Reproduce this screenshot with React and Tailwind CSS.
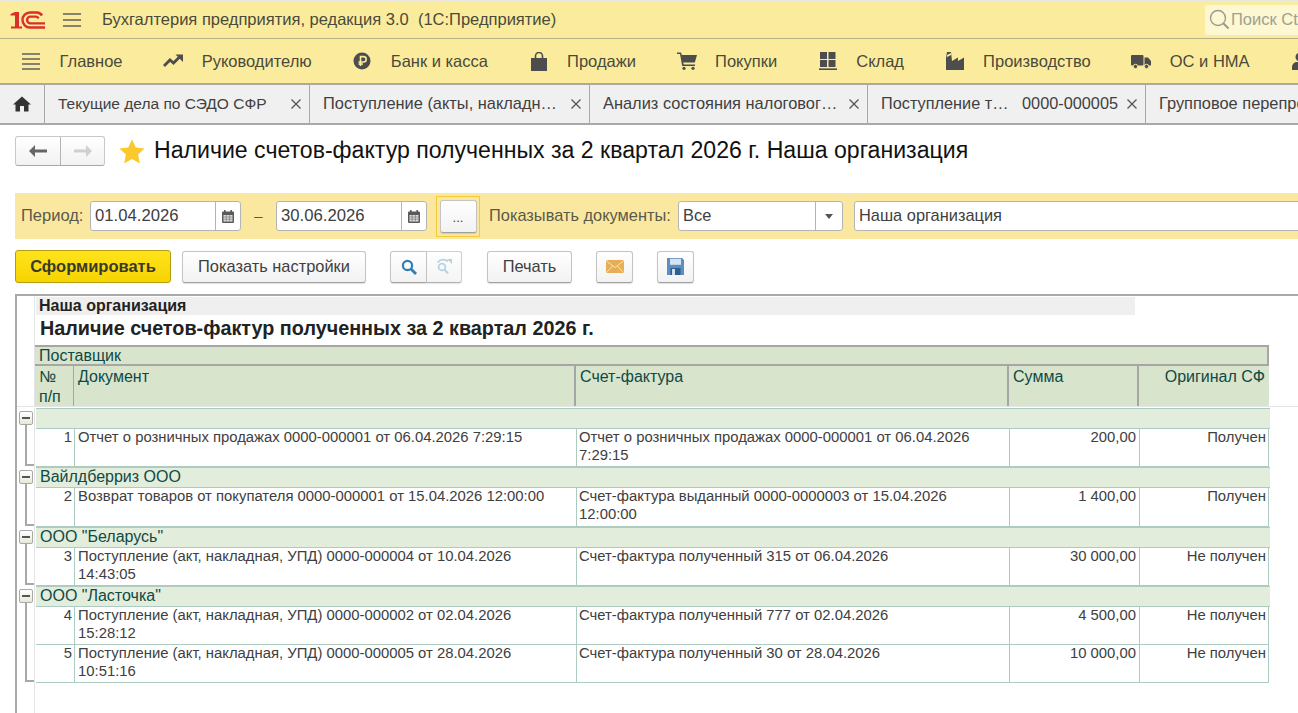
import React from 'react';

const font = 'font-["Liberation_Sans",Arial,sans-serif]';

const Logo1C = () => (
    <svg width="36" height="18" viewBox="0 0 36 18" fill="none">
        <path d="M0.5 3 L5 1 H9 V15.5 H12 V17.5 H1 V15.5 H5 V4.5 H0.5 Z" fill="#d9302c" />
        <path d="M35 16.5 H20 A7.5 7.5 0 0 1 20 1.5 H27 A6.5 6.5 0 0 1 32 4.5" stroke="#d9302c" strokeWidth="2.4" />
        <path d="M35 12.4 H20.5 A3.4 3.4 0 0 1 20.5 5.6 H26 A3 3 0 0 1 28.5 7.5" stroke="#d9302c" strokeWidth="2.4" />
    </svg>
);

const Burger = ({ count = 3, w = 18 }) => (
    <svg width={w} height="18" viewBox="0 0 18 18" stroke="#555" strokeWidth="1.4">
        {count === 3 ? (
            <>
                <path d="M0 3 H18" />
                <path d="M0 9 H18" />
                <path d="M0 15 H18" />
            </>
        ) : (
            <>
                <path d="M0 2 H18" />
                <path d="M0 7 H18" />
                <path d="M0 12 H18" />
                <path d="M0 17 H18" />
            </>
        )}
    </svg>
);

const Trend = () => (
    <svg width="20" height="16" viewBox="0 0 20 16" fill="none">
        <path d="M1 13 L7 7 L10.5 10 L17 3.5" stroke="#4d4d4d" strokeWidth="2.8" />
        <path d="M12.5 1.5 H20 V9 Z" fill="#4d4d4d" />
    </svg>
);

const Ruble = () => (
    <svg width="18" height="18" viewBox="0 0 18 18">
        <circle cx="9" cy="9" r="8.5" fill="#4d4d4d" />
        <path d="M7.5 14 V4.6 H10.5 A2.7 2.7 0 0 1 10.5 10 H5.5 M5.5 12 H10" fill="none" stroke="#fbec9d" strokeWidth="1.6" />
    </svg>
);

const Bag = () => (
    <svg width="16" height="19" viewBox="0 0 16 19">
        <path d="M0 6 H16 V19 H0 Z" fill="#4d4d4d" />
        <path d="M4.5 9 V4 A3.5 3.5 0 0 1 11.5 4 V9" fill="none" stroke="#4d4d4d" strokeWidth="1.6" />
    </svg>
);

const Cart = () => (
    <svg width="20" height="18" viewBox="0 0 20 18">
        <path d="M0 0.5 H4 L4.8 3 H20 L17.8 10.5 H6.2 L6.8 12.5 H18 V14 H5.2 L3 2 H0 Z" fill="#4d4d4d" />
        <circle cx="7" cy="16.3" r="1.6" fill="#4d4d4d" />
        <circle cx="16" cy="16.3" r="1.6" fill="#4d4d4d" />
    </svg>
);

const Warehouse = () => (
    <svg width="18" height="18" viewBox="0 0 18 18" fill="#4d4d4d">
        <rect x="1" y="0" width="7" height="7" />
        <rect x="9.5" y="0" width="7" height="7" />
        <rect x="1" y="8" width="7" height="7" />
        <rect x="9.5" y="8" width="7" height="7" />
        <rect x="0" y="16.4" width="18" height="1.6" />
    </svg>
);

const Factory = () => (
    <svg width="18" height="18" viewBox="0 0 18 18" fill="#4d4d4d">
        <path d="M0 18 V6 L1 0 H5 L6 9 L12 5.5 V9 L18 5.5 V18 Z" />
        <path d="M1 3 L5 1 V3 L1 5 Z" fill="#fbec9d" />
    </svg>
);

const Truck = () => (
    <svg width="20" height="15" viewBox="0 0 20 15" fill="#4d4d4d">
        <rect x="0" y="1" width="12.5" height="10.5" rx="1" />
        <path d="M13.5 3.5 H17 L20 7 V11.5 H13.5 Z" />
        <circle cx="4.5" cy="12.5" r="2.2" stroke="#fbec9d" />
        <circle cx="15.5" cy="12.5" r="2.2" stroke="#fbec9d" />
    </svg>
);

const User = () => (
    <svg width="18" height="18" viewBox="0 0 18 18" fill="#4d4d4d">
        <circle cx="9" cy="5" r="4.5" />
        <path d="M1 18 V15 A5 5 0 0 1 6 10 H12 A5 5 0 0 1 17 15 V18 Z" />
    </svg>
);

const Home = () => (
    <svg width="18" height="16" viewBox="0 0 18 16" fill="#333">
        <path d="M9 0.5 L18 8.5 H15.5 V15.5 H11 V10 H7 V15.5 H2.5 V8.5 H0 Z" />
    </svg>
);

const Star = () => (
    <svg width="26" height="25" viewBox="0 0 26 25">
        <path d="M13 0.5 L16.8 8.6 L25.6 9.6 L19.1 15.6 L20.8 24.4 L13 20 L5.2 24.4 L6.9 15.6 L0.4 9.6 L9.2 8.6 Z" fill="#fbc92c" />
    </svg>
);

const Calendar = () => (
    <svg width="12" height="13" viewBox="0 0 12 13">
        <rect x="0" y="1.5" width="12" height="11.5" rx="1" fill="#5a5a5a" />
        <rect x="2" y="0" width="1.6" height="3" fill="#5a5a5a" />
        <rect x="8.4" y="0" width="1.6" height="3" fill="#5a5a5a" />
        <path d="M1.5 5 H10.5 V11.5 H1.5 Z" fill="#ddd" />
        <path d="M1.5 7 H10.5 M1.5 9.2 H10.5 M4.2 5 V11.5 M7.4 5 V11.5" stroke="#777" strokeWidth="0.7" />
    </svg>
);

const Magnifier = ({ color = '#2f7fb5' }) => (
    <svg width="16" height="16" viewBox="0 0 16 16" fill="none">
        <circle cx="6.5" cy="6.5" r="4.6" stroke={color} strokeWidth="2.2" />
        <path d="M10 10 L15 15" stroke={color} strokeWidth="2.8" />
    </svg>
);

const SearchRefresh = () => (
    <svg width="18" height="17" viewBox="0 0 18 17" fill="none" stroke="#a5cbdc">
        <circle cx="7" cy="9" r="3.4" strokeWidth="1.8" />
        <path d="M9.6 11.6 L13 15.5" strokeWidth="2.2" />
        <path d="M2.5 4.5 A7 7 0 0 1 13 3.5" strokeWidth="1.8" />
        <path d="M12 1 H17 V6 Z" fill="#a5cbdc" stroke="none" />
    </svg>
);

const Mail = () => (
    <svg width="18" height="13" viewBox="0 0 18 13">
        <rect x="0" y="0" width="18" height="13" rx="1.5" fill="#e8ad55" />
        <path d="M0.5 1 L9 7.5 L17.5 1 M0.5 12.5 L6.5 6 M17.5 12.5 L11.5 6" fill="none" stroke="#fbe3b4" strokeWidth="1" />
    </svg>
);

const Save = () => (
    <svg width="17" height="17" viewBox="0 0 17 17">
        <path d="M0 0 H15 L17 2 V17 H0 Z" fill="#5c8fc0" />
        <rect x="3" y="0.8" width="11" height="6" fill="#d5e4f2" />
        <rect x="3.5" y="10" width="10" height="7" fill="#2f5f8e" />
        <rect x="5" y="11" width="3" height="6" fill="#cfdfee" />
    </svg>
);

const menu = [
    { icon: <Burger count={4} />, label: 'Главное' },
    { icon: <Trend />, label: 'Руководителю' },
    { icon: <Ruble />, label: 'Банк и касса' },
    { icon: <Bag />, label: 'Продажи' },
    { icon: <Cart />, label: 'Покупки' },
    { icon: <Warehouse />, label: 'Склад' },
    { icon: <Factory />, label: 'Производство' },
    { icon: <Truck />, label: 'ОС и НМА' },
    { icon: <User />, label: '' },
];

const tabs = [
    { title: 'Текущие дела по СЭДО СФР', cls: 'w-[265px] text-[15.5px]' },
    { title: 'Поступление (акты, накладн…', cls: 'w-[280px] text-[16.4px]' },
    { title: 'Анализ состояния налоговог…', cls: 'w-[278px] text-[16.4px]' },
    { title: 'Поступление т…   0000-000005', cls: 'w-[278px] text-[16.3px]' },
];

const Tab = ({ title, cls }) => (
    <div className={`${cls} shrink-0 flex items-center justify-between pl-[13px] pr-[8px] border-r border-[#a8a8a8]`}>
        <span className="pb-[1px] text-[#404040] whitespace-pre">{title}</span>
        <svg width="10" height="10" viewBox="0 0 10 10" stroke="#555" strokeWidth="1.3">
            <path d="M0.5 0.5 L9.5 9.5 M9.5 0.5 L0.5 9.5" />
        </svg>
    </div>
);

const Btn = ({ children, cls = '' }) => (
    <div className={`${cls} h-[32px] shrink-0 flex items-center justify-center rounded-[3px] border border-[#c4c4c4] border-b-[#a0a0a0] bg-gradient-to-b from-white to-[#f2f2f2] text-[#404040] text-[16.4px] shadow-[0_1px_1px_rgba(0,0,0,0.12)]`}>
        {children}
    </div>
);

const DateField = ({ value }) => (
    <div className="w-[151px] h-[30px] shrink-0 flex bg-white border border-[#b4b4b4] rounded-[3px]">
        <div className="w-[125px] border-r border-[#b4b4b4] pl-[4px] text-[16.7px] text-[#404040] leading-[27px]">{value}</div>
        <div className="flex-1 flex items-center justify-center"><Calendar /></div>
    </div>
);

// колонки отчета: № / Документ / Счет-фактура / Сумма / Оригинал СФ
const colNum = 'w-[39px] shrink-0';
const colDoc = 'w-[502px] shrink-0';
const colInv = 'w-[433px] shrink-0';
const colSum = 'w-[130px] shrink-0';

const HeadCell = ({ cls, children }) => (
    <div className={`${cls} px-[4px] pt-[1px] border-[#a6a6a6] leading-[20px]`}>{children}</div>
);

const Lines = ({ lines }) => (
    <div className="-mt-[1px]">
        {lines.map((line) => <div key={line} className="whitespace-nowrap">{line}</div>)}
    </div>
);

const Row = ({ num, doc, inv, sum, orig, h }) => (
    <div className={`${h} flex border-b border-[#aecbc2] text-[14.85px] leading-[18px] text-[#404040]`}>
        <div className={`${colNum} pr-[2px] text-right border-r border-[#aecbc2]`}><Lines lines={[String(num)]} /></div>
        <div className={`${colDoc} pl-[3px] border-r border-[#aecbc2]`}><Lines lines={doc} /></div>
        <div className={`${colInv} pl-[2px] border-r border-[#aecbc2]`}><Lines lines={inv} /></div>
        <div className={`${colSum} pr-[3px] text-right border-r border-[#aecbc2]`}><Lines lines={[sum]} /></div>
        <div className="w-[129px] shrink-0 pr-[2px] text-right border-r border-[#aecbc2]"><Lines lines={[orig]} /></div>
    </div>
);

const Group = ({ name, rows }) => (
    <div className="flex">
        <div className="w-[18px] shrink-0 flex flex-col items-start pl-[2px] border-r border-[#e4e4e4]">
            <div className="mt-[3px] w-[14px] h-[14px] shrink-0 flex items-center justify-center rounded-[2px] border border-[#a8a8a8] bg-gradient-to-b from-white to-[#e8e8d8]">
                <div className="w-[8px] h-[2px] bg-[#555]"></div>
            </div>
            <div className="ml-[6px] w-[9px] flex-1 border-l-2 border-b-2 border-[#a8a8a8] mb-[1px]"></div>
        </div>
        <div className="ml-[1px] w-[1233px] shrink-0">
            <div className="h-[21px] pl-[4px] w-[1234px] bg-[#e3eddc] border-y border-[#aecbc2] text-[#0f4a45] text-[16px] leading-[18px]">{name}</div>
            {rows.map((r) => <Row key={r.num} {...r} />)}
        </div>
    </div>
);

const groups = [
    {
        name: '',
        rows: [{
            num: 1,
            doc: ['Отчет о розничных продажах 0000-000001 от 06.04.2026 7:29:15'],
            inv: ['Отчет о розничных продажах 0000-000001 от 06.04.2026', '7:29:15'],
            sum: '200,00',
            orig: 'Получен',
            h: 'h-[38px]',
        }],
    },
    {
        name: 'Вайлдберриз ООО',
        rows: [{
            num: 2,
            doc: ['Возврат товаров от покупателя 0000-000001 от 15.04.2026 12:00:00'],
            inv: ['Счет-фактура выданный 0000-0000003 от 15.04.2026', '12:00:00'],
            sum: '1 400,00',
            orig: 'Получен',
            h: 'h-[39px]',
        }],
    },
    {
        name: 'ООО "Беларусь"',
        rows: [{
            num: 3,
            doc: ['Поступление (акт, накладная, УПД) 0000-000004 от 10.04.2026', '14:43:05'],
            inv: ['Счет-фактура полученный 315 от 06.04.2026'],
            sum: '30 000,00',
            orig: 'Не получен',
            h: 'h-[38px]',
        }],
    },
    {
        name: 'ООО "Ласточка"',
        rows: [
            {
                num: 4,
                doc: ['Поступление (акт, накладная, УПД) 0000-000002 от 02.04.2026', '15:28:12'],
                inv: ['Счет-фактура полученный 777 от 02.04.2026'],
                sum: '4 500,00',
                orig: 'Не получен',
                h: 'h-[38px]',
            },
            {
                num: 5,
                doc: ['Поступление (акт, накладная, УПД) 0000-000005 от 28.04.2026', '10:51:16'],
                inv: ['Счет-фактура полученный 30 от 28.04.2026'],
                sum: '10 000,00',
                orig: 'Не получен',
                h: 'h-[38px]',
            },
        ],
    },
];

const App = () => {
    return (
        <div className={`${font} w-[1298px] h-[713px] overflow-hidden bg-white`}>
            {/* шапка приложения */}
            <div className="h-[39px] border-t border-[#e8e8e0] bg-[#fbec9d] border-b border-b-[#b8b083] flex items-center">
                <div className="ml-[10px] flex"><Logo1C /></div>
                <div className="ml-[17px] flex"><Burger /></div>
                <div className="ml-[21px] text-[16.5px] text-[#4a4a3a] whitespace-pre">Бухгалтерия предприятия, редакция 3.0  (1С:Предприятие)</div>
                <div className="ml-auto w-[93px] h-[30px] rounded-l-[3px] bg-[#fdf7d2] flex items-center pl-[4px] gap-[1px] overflow-hidden">
                    <svg width="21" height="21" viewBox="0 0 21 21" fill="none" className="shrink-0">
                        <circle cx="9" cy="9" r="7.5" stroke="#9a9a90" strokeWidth="1.4" />
                        <path d="M14.5 14.5 L19.5 19.5" stroke="#9a9a90" strokeWidth="2" />
                    </svg>
                    <span className="text-[16.5px] text-[#a0a090] whitespace-nowrap">Поиск Ctrl+F</span>
                </div>
            </div>

            {/* разделы */}
            <div className="h-[46px] bg-[#fbec9d] border-b-2 border-[#a9a9a0] flex items-center pl-[21px] gap-[40.6px] overflow-hidden">
                {menu.map((m) => (
                    <div key={m.label} className="flex items-center shrink-0">
                        <div className="w-[20px] mr-[18.5px] flex justify-center">{m.icon}</div>
                        <span className="text-[16.5px] text-[#4a4a3a] whitespace-nowrap">{m.label}</span>
                    </div>
                ))}
            </div>

            {/* вкладки */}
            <div className="h-[40px] bg-[#f0f0f0] border-b-2 border-[#a9a9a9] flex overflow-hidden">
                <div className="w-[45px] shrink-0 flex items-center justify-center border-r border-[#a8a8a8]"><Home /></div>
                {tabs.map((t) => <Tab key={t.title} {...t} />)}
                <div className="pl-[13px] pb-[1px] flex items-center text-[#404040] text-[16.4px] whitespace-nowrap">Групповое перепроведение документов</div>
            </div>

            {/* заголовок формы */}
            <div className="flex items-center h-[30px] mt-[11px] ml-[15px]">
                <div className="flex h-[30px] w-[90px] rounded-[3px] border border-[#c8c8c8] border-b-[#a8a8a8] bg-gradient-to-b from-white to-[#f2f2f2]">
                    <div className="w-[45px] border-r border-[#b4b4b4] flex items-center justify-center">
                        <svg width="18" height="12" viewBox="0 0 18 12" fill="#666"><path d="M6 0 V4.5 H18 V7.5 H6 V12 L0 6 Z" /></svg>
                    </div>
                    <div className="flex-1 flex items-center justify-center">
                        <svg width="18" height="12" viewBox="0 0 18 12" fill="#cfcfcf"><path d="M12 0 V4.5 H0 V7.5 H12 V12 L18 6 Z" /></svg>
                    </div>
                </div>
                <div className="ml-[14px] flex"><Star /></div>
                <div className="ml-[9px] pb-[2px] text-[23.1px] text-[#111] whitespace-nowrap">Наличие счетов-фактур полученных за 2 квартал 2026 г. Наша организация</div>
            </div>

            {/* отбор */}
            <div className="h-[46px] mt-[27px] ml-[15px] bg-[#fbe8a0] flex items-center pl-[6px] overflow-hidden">
                <span className="w-[69px] shrink-0 pb-[1px] text-[16.5px] text-[#5a5a4a] whitespace-nowrap">Период:</span>
                <DateField value="01.04.2026" />
                <span className="w-[35px] shrink-0 text-center text-[15px] text-[#5a5a4a]">–</span>
                <DateField value="30.06.2026" />
                <div className="ml-[9px] w-[44px] h-[41px] shrink-0 flex items-center justify-center border border-[#f4c93c]">
                    <Btn cls="w-[37px] !h-[33px] pt-[3px] !text-[13px]">...</Btn>
                </div>
                <span className="ml-[9px] w-[189px] shrink-0 pb-[1px] text-[16.4px] text-[#5a5a4a] whitespace-nowrap">Показывать документы:</span>
                <div className="w-[165px] h-[30px] shrink-0 flex bg-white border border-[#b4b4b4] rounded-[3px]">
                    <div className="w-[137px] border-r border-[#b4b4b4] pl-[4px] text-[16.4px] text-[#404040] leading-[27px]">Все</div>
                    <div className="flex-1 flex items-center justify-center">
                        <svg width="8" height="5" viewBox="0 0 8 5" fill="#555"><path d="M0 0 H8 L4 5 Z" /></svg>
                    </div>
                </div>
                <div className="ml-[11px] w-[500px] h-[30px] shrink-0 bg-white border border-[#b4b4b4] rounded-[3px] pl-[4px] text-[16.4px] text-[#404040] leading-[27px]">Наша организация</div>
            </div>

            {/* команды */}
            <div className="flex items-center h-[33px] mt-[11px] ml-[15px]">
                <div className="w-[156px] h-[33px] shrink-0 flex items-center justify-center rounded-[3px] border border-[#b89c10] bg-gradient-to-b from-[#ffe31a] to-[#f5d400] text-[16.5px] font-bold text-[#3a3a2a]">Сформировать</div>
                <Btn cls="ml-[11px] w-[184px]">Показать настройки</Btn>
                <div className="ml-[24px] flex h-[32px]">
                    <Btn cls="w-[37px] rounded-r-none"><Magnifier /></Btn>
                    <Btn cls="w-[35px] rounded-l-none border-l-0 opacity-80"><SearchRefresh /></Btn>
                </div>
                <Btn cls="ml-[25px] w-[85px]">Печать</Btn>
                <Btn cls="ml-[24px] w-[37px]"><Mail /></Btn>
                <Btn cls="ml-[24px] w-[37px]"><Save /></Btn>
            </div>

            {/* табличный документ */}
            <div className="mt-[11px] ml-[15px] h-[420px] border-t-2 border-l-2 border-[#a9a9a9] flex flex-col">
                <div className="ml-[17px] border-l border-[#e4e4e4]">
                    <div className="w-[1099px] ml-[1px] mt-[1px] h-[18px] bg-[#efefef] pl-[3px] text-[16px] font-bold text-[#222] leading-[17px] whitespace-nowrap">Наша организация</div>
                    <div className="h-[30px] pl-[5px] text-[19.8px] font-bold text-[#222] leading-[27px] whitespace-nowrap">Наличие счетов-фактур полученных за 2 квартал 2026 г.</div>
                    <div className="w-[1234px] text-[16px] text-[#0f4a45] bg-[#d8e4cc]">
                        <div className="h-[21px] border-t-2 border-r-2 border-b-2 border-[#a6a6a6] pl-[4px] leading-[18px]">Поставщик</div>
                        <div className="h-[40px] flex">
                            <HeadCell cls={`${colNum} border-r`}>№<br />п/п</HeadCell>
                            <HeadCell cls={`${colDoc} border-r-2`}>Документ</HeadCell>
                            <HeadCell cls={`${colInv} border-r-2`}>Счет-фактура</HeadCell>
                            <HeadCell cls={`${colSum} border-r-2`}>Сумма</HeadCell>
                            <HeadCell cls="w-[130px] shrink-0 text-right">Оригинал СФ</HeadCell>
                        </div>
                    </div>
                </div>
                <div className="h-[2px] shrink-0 border-t border-[#e4e4e4]"></div>
                {groups.map((g) => <Group key={g.name} {...g} />)}
                <div className="ml-[17px] flex-1 border-l border-[#e4e4e4]"></div>
            </div>
        </div>
    );
};

export default App;
